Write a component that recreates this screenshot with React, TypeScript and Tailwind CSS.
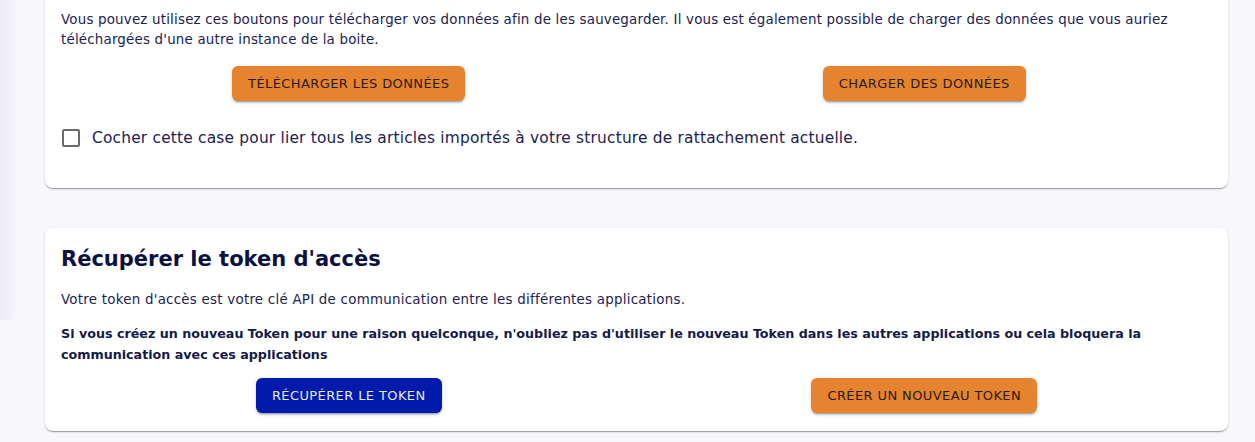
const font = { fontFamily: '"DejaVu Sans", sans-serif' };

const orangeBtn =
  "rounded-md bg-[#e5832f] px-4 h-[35px] text-[13px] uppercase tracking-[0.4px] text-[#2a1b10] shadow-[0_3px_1px_-2px_rgba(0,0,0,0.2),0_2px_2px_0_rgba(0,0,0,0.14),0_1px_5px_0_rgba(0,0,0,0.12)]";
const blueBtn =
  "rounded-md bg-[#001aab] px-4 h-[35px] text-[13px] uppercase tracking-[0.4px] text-[#e8eaff] shadow-[0_3px_1px_-2px_rgba(0,0,0,0.2),0_2px_2px_0_rgba(0,0,0,0.14),0_1px_5px_0_rgba(0,0,0,0.12)]";
const card =
  "rounded-lg bg-white px-4 shadow-[0_2px_1px_-1px_rgba(0,0,0,0.2),0_1px_1px_0_rgba(0,0,0,0.14),0_1px_3px_0_rgba(0,0,0,0.12)]";

const App = () => {
  return (
    <div className="flex h-[442px] w-[1255px] overflow-hidden bg-[#f7f7fc] text-[#1b2150]" style={font}>
      <div className="h-[320px] w-[15px] rounded-br-md bg-gradient-to-r from-[#ececf3] to-[#f4f4f9]"></div>
      <div className="ml-[30px] flex w-[1183px] flex-col gap-10">
        <div className={`${card} -mt-4 pt-[26px] pb-[40px]`}>
          <p className="text-[13.4px] leading-[20px] tracking-[0.2px]">
            Vous pouvez utilisez ces boutons pour télécharger vos données afin de les sauvegarder. Il vous est
            également possible de charger des données que vous auriez téléchargées d'une autre instance de la boite.
          </p>
          <div className="mt-4 grid grid-cols-2">
            <div className="flex justify-center">
              <button className={orangeBtn}>Télécharger les données</button>
            </div>
            <div className="flex justify-center">
              <button className={orangeBtn}>Charger des données</button>
            </div>
          </div>
          <label className="mt-[27px] flex items-center gap-3 pl-px">
            <span className="h-[18px] w-[18px] rounded-[2px] border-2 border-[#6b6b6b]"></span>
            <span className="text-[15.4px] leading-[20px] tracking-[0.2px]">
              Cocher cette case pour lier tous les articles importés à votre structure de rattachement actuelle.
            </span>
          </label>
        </div>

        <div className={`${card} pt-[14px] pb-[18px]`}>
          <h2 className="text-[21px] font-extrabold leading-[34px] text-[#0b1242]">Récupérer le token d'accès</h2>
          <p className="mt-[14px] text-[13.4px] leading-[20px] tracking-[0.25px]">
            Votre token d'accès est votre clé API de communication entre les différentes applications.
          </p>
          <p className="mt-[13px] text-[12.7px] font-semibold leading-[21px] text-[#141a48]">
            Si vous créez un nouveau Token pour une raison quelconque, n'oubliez pas d'utiliser le nouveau Token dans
            les autres applications ou cela bloquera la communication avec ces applications
          </p>
          <div className="mt-[13px] grid grid-cols-2">
            <div className="flex justify-center">
              <button className={blueBtn}>Récupérer le token</button>
            </div>
            <div className="flex justify-center">
              <button className={orangeBtn}>Créer un nouveau token</button>
            </div>
          </div>
        </div>
      </div>
    </div>
  );
};

export default App;
